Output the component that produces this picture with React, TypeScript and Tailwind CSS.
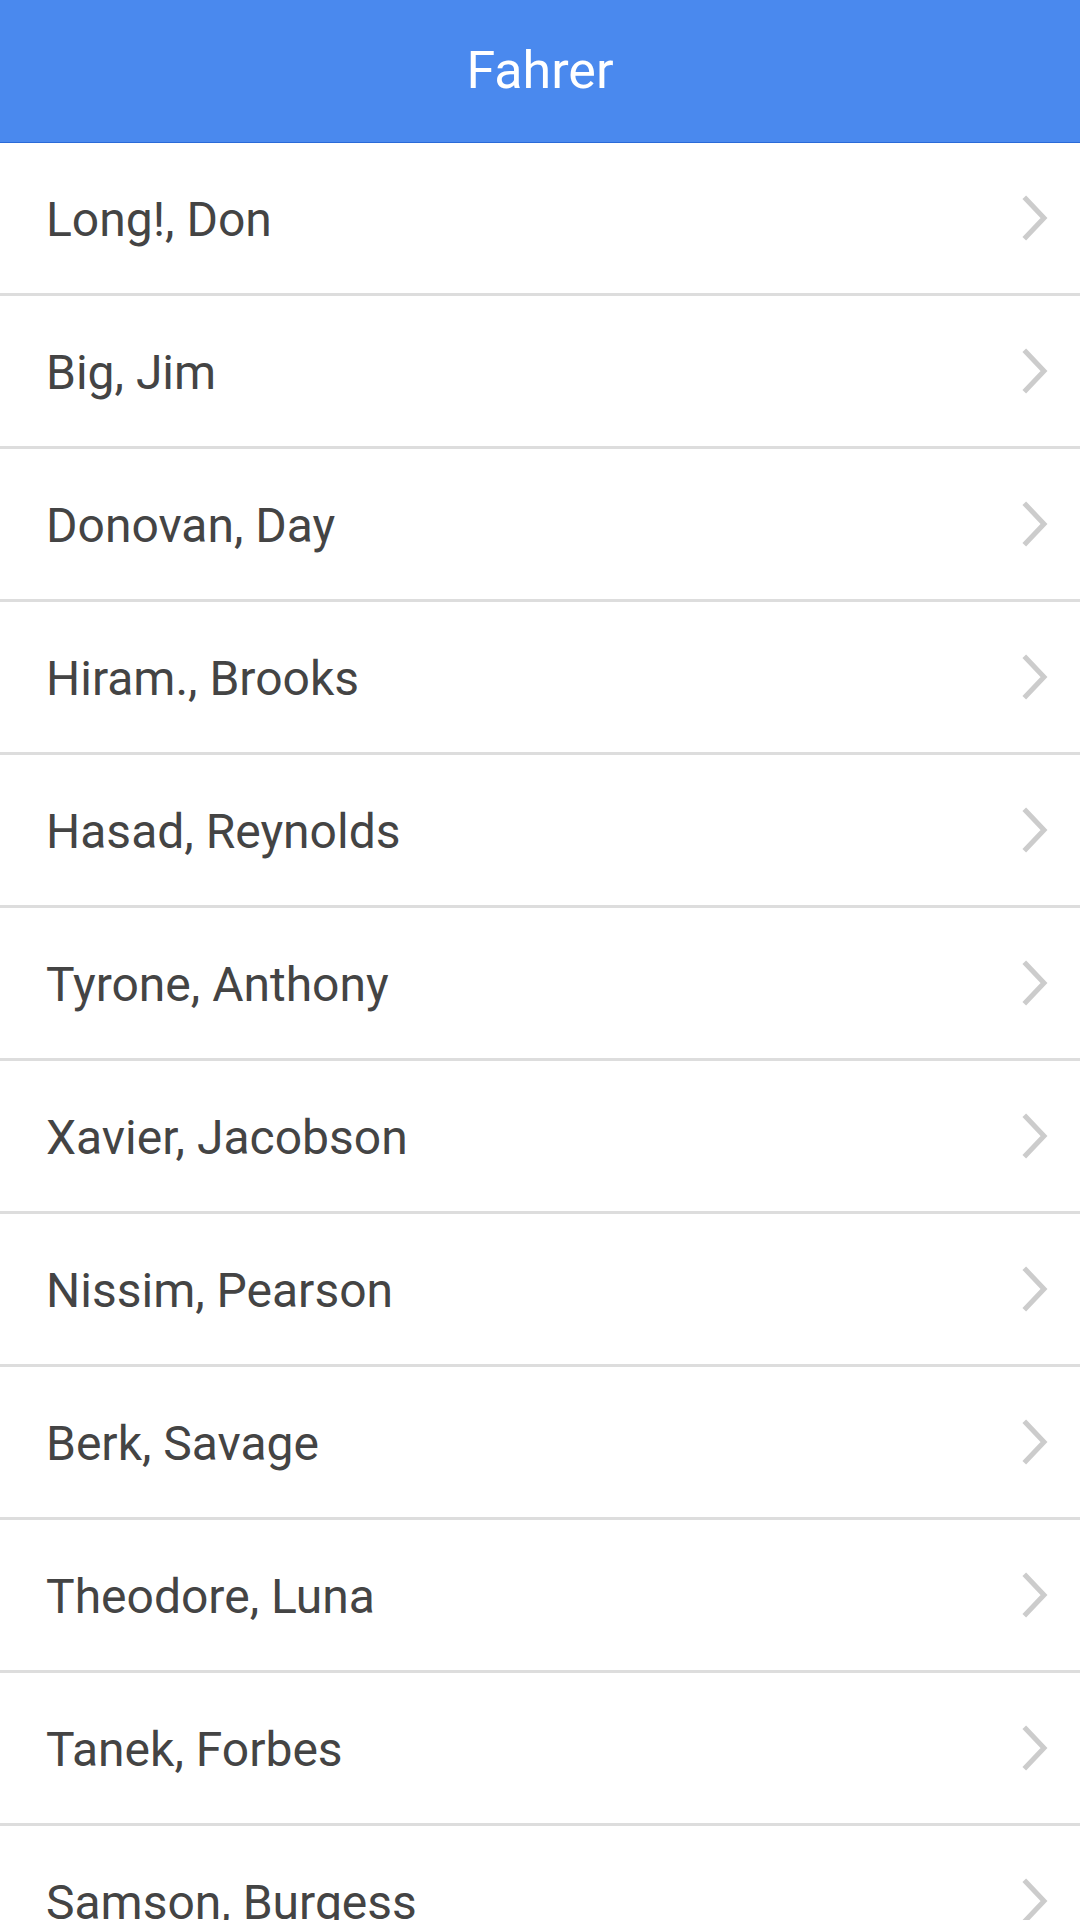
import React from "react";

const names = [
  "Long!, Don",
  "Big, Jim",
  "Donovan, Day",
  "Hiram., Brooks",
  "Hasad, Reynolds",
  "Tyrone, Anthony",
  "Xavier, Jacobson",
  "Nissim, Pearson",
  "Berk, Savage",
  "Theodore, Luna",
  "Tanek, Forbes",
  "Samson, Burgess",
  "Quinn, Ellis",
];

function Chevron() {
  return (
    <svg width="30" height="48" viewBox="0 0 30 48" className="shrink-0">
      <path d="M6 5 L24 24 L6 43" fill="none" stroke="#cccccc" strokeWidth="5" strokeLinecap="square" />
    </svg>
  );
}

export default function App() {
  return (
    <div className="w-[1080px] h-[1920px] overflow-hidden bg-white" style={{ fontFamily: "Roboto, sans-serif" }}>
      <div className="h-[143px] bg-[#4a89ee] border-b border-[#2a6ad8] flex items-center justify-center">
        <span className="text-white text-[52px] leading-none">Fahrer</span>
      </div>
      {names.map((n) => (
        <div key={n} className="h-[153px] border-b-[3px] border-[#dddddd] flex items-center justify-between pl-[46px] pr-[30px]">
          <span className="text-[#444444] text-[48px] leading-none pt-[4px]">{n}</span>
          <Chevron />
        </div>
      ))}
    </div>
  );
}
